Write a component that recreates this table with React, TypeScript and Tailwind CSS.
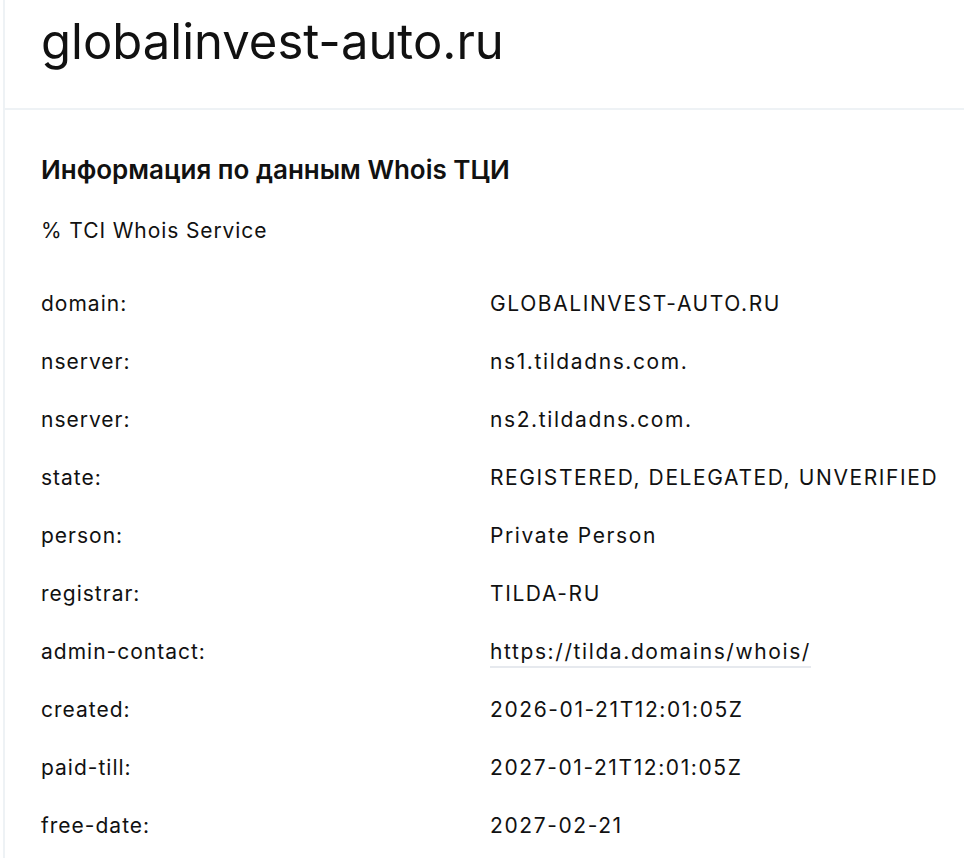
const rows: [string, string, boolean?][] = [
  ['domain:', 'GLOBALINVEST-AUTO.RU'],
  ['nserver:', 'ns1.tildadns.com.'],
  ['nserver:', 'ns2.tildadns.com.'],
  ['state:', 'REGISTERED, DELEGATED, UNVERIFIED'],
  ['person:', 'Private Person'],
  ['registrar:', 'TILDA-RU'],
  ['admin-contact:', 'https://tilda.domains/whois/', true],
  ['created:', '2026-01-21T12:01:05Z'],
  ['paid-till:', '2027-01-21T12:01:05Z'],
  ['free-date:', '2027-02-21'],
]

export default function App() {
  return (
    <div className="min-h-screen bg-white text-[#111]" style={{ fontFamily: 'Inter, "Noto Sans", sans-serif' }}>
      <div className="ml-[3px] min-h-screen border-l-2 border-[#eef2f5]">
        {/* заголовок домена */}
        <div className="h-[110px] border-b-2 border-[#eef2f5] pl-[36px] pt-[10px]">
          <h1 className="text-[49px] leading-[64px] font-normal">globalinvest-auto.ru</h1>
        </div>

        <div className="pl-[36px] pt-[40px]">
          <h2 className="text-[26px] leading-[40px] font-semibold">Информация по данным Whois ТЦИ</h2>
          <p className="mt-[26px] text-[21px] leading-[30px] tracking-[0.9px]">% TCI Whois Service</p>

          <div className="mt-[43px] flex flex-col">
            {rows.map(([k, v, link], i) => (
              <div key={i} className="flex h-[58px] text-[21px] leading-[30px]">
                <div className="w-[449px] shrink-0 tracking-[1px]">{k}</div>
                <div className="tracking-[1.6px]">
                  {link ? (
                    <a href="#" className="border-b-2 border-[#e6e9ee] pb-[2px]">{v}</a>
                  ) : v}
                </div>
              </div>
            ))}
          </div>
        </div>
      </div>
    </div>
  )
}
